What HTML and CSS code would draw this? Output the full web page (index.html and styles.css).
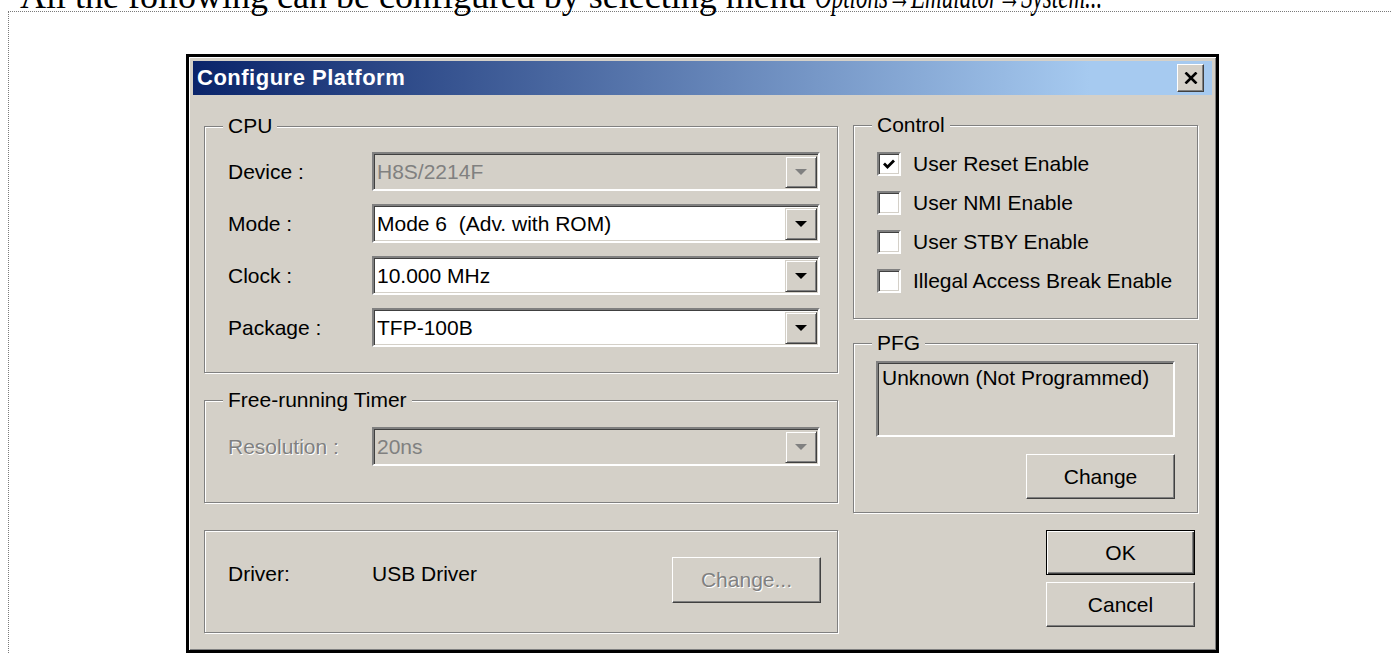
FILE: index.html
```html
<!DOCTYPE html>
<html lang="en">
<head>
<meta charset="utf-8">
<title>Configure Platform</title>
<link rel="stylesheet" href="styles.css">
</head>
<body>
<p class="lead">All the following can be configured by selecting menu <em class="menu-path">Options&#8594;Emulator&#8594;System...</em></p>

<div class="sheet">
  <div class="dialog">
    <div class="titlebar">
      <span class="title">Configure Platform</span>
      <span class="close-btn" aria-label="Close">
        <svg width="14" height="12" viewBox="0 0 14 12"><path d="M1.5 0.5 L12.5 11.5 M12.5 0.5 L1.5 11.5" stroke="#000" stroke-width="2.6" fill="none"/></svg>
      </span>
    </div>

    <div class="dialog-body">
      <div class="col col-left">
        <div class="group group-cpu">
          <span class="group-label">CPU</span>
          <div class="form-grid">
            <span class="field-label">Device :</span>
            <div class="combo is-disabled">
              <span class="combo-value">H8S/2214F</span>
              <span class="combo-btn"><svg width="12" height="6" viewBox="0 0 12 6"><path d="M0 0 H12 L6 6 Z"/></svg></span>
            </div>

            <span class="field-label">Mode :</span>
            <div class="combo">
              <span class="combo-value">Mode 6&nbsp; (Adv. with ROM)</span>
              <span class="combo-btn"><svg width="12" height="6" viewBox="0 0 12 6"><path d="M0 0 H12 L6 6 Z"/></svg></span>
            </div>

            <span class="field-label">Clock :</span>
            <div class="combo">
              <span class="combo-value">10.000 MHz</span>
              <span class="combo-btn"><svg width="12" height="6" viewBox="0 0 12 6"><path d="M0 0 H12 L6 6 Z"/></svg></span>
            </div>

            <span class="field-label">Package :</span>
            <div class="combo">
              <span class="combo-value">TFP-100B</span>
              <span class="combo-btn"><svg width="12" height="6" viewBox="0 0 12 6"><path d="M0 0 H12 L6 6 Z"/></svg></span>
            </div>
          </div>
        </div>

        <div class="group group-timer">
          <span class="group-label">Free-running Timer</span>
          <div class="form-grid">
            <span class="field-label is-disabled">Resolution :</span>
            <div class="combo is-disabled">
              <span class="combo-value">20ns</span>
              <span class="combo-btn"><svg width="12" height="6" viewBox="0 0 12 6"><path d="M0 0 H12 L6 6 Z"/></svg></span>
            </div>
          </div>
        </div>

        <div class="group group-driver">
          <span class="driver-label">Driver:</span>
          <span class="driver-name">USB Driver</span>
          <button class="btn btn-driver" disabled>Change...</button>
        </div>
      </div>

      <div class="col col-right">
        <div class="group group-control">
          <span class="group-label">Control</span>
          <label class="check-row">
            <span class="checkbox is-checked"><svg width="14" height="14" viewBox="0 0 14 14"><path d="M2 6.5 L5.5 10 L12 3.5" stroke="#000" stroke-width="2.8" fill="none"/></svg></span>
            <span>User Reset Enable</span>
          </label>
          <label class="check-row">
            <span class="checkbox"></span>
            <span>User NMI Enable</span>
          </label>
          <label class="check-row">
            <span class="checkbox"></span>
            <span>User STBY Enable</span>
          </label>
          <label class="check-row">
            <span class="checkbox"></span>
            <span>Illegal Access Break Enable</span>
          </label>
        </div>

        <div class="group group-pfg">
          <span class="group-label">PFG</span>
          <div class="static-box">Unknown (Not Programmed)</div>
          <button class="btn btn-pfg">Change</button>
        </div>

        <div class="dialog-actions">
          <button class="btn btn-default">OK</button>
          <button class="btn">Cancel</button>
        </div>
      </div>
    </div>
  </div>
</div>
</body>
</html>
```

FILE: styles.css
```css
* {
  box-sizing: border-box;
}

html,
body {
  margin: 0;
  background: #fff;
}

body {
  height: 653px;
  overflow: hidden;
  font-family: "Liberation Sans", Arial, sans-serif;
  font-size: 21px;
  color: #000;
}

/* document paragraph above the figure frame */
.lead {
  margin: -22px 0 0 20px;
  height: 33px;
  font: 36px/36px "Liberation Serif", "Times New Roman", serif;
  white-space: nowrap;
}

/* the menu path is set in a condensed italic */
.menu-path {
  display: inline-block;
  transform: scaleX(0.64);
  transform-origin: 0 50%;
}

/* dotted figure frame */
.sheet {
  margin-left: 8px;
  height: 642px;
  padding: 42px 0 0 177px;
  border-top: 1px dotted #7a7a7a;
  border-left: 1px dotted #7a7a7a;
}

/* classic window */
.dialog {
  width: 1033px;
  height: 599px;
  padding: 4px;
  background: #d4d0c8;
  border: 3px solid #000;
  box-shadow: inset 1px 1px 0 #fff, inset -1px -1px 0 #808080;
  display: flex;
  flex-direction: column;
}

.titlebar {
  height: 34px;
  flex: none;
  display: flex;
  align-items: center;
  padding: 0 8px 0 4px;
  background: linear-gradient(to right, #0a246a 0%, #a6caf0 88%, #a6caf0 100%);
}

.title {
  color: #fff;
  font-weight: bold;
  font-size: 22px;
  letter-spacing: 0.5px;
}

.close-btn {
  margin-left: auto;
  width: 27px;
  height: 28px;
  display: flex;
  align-items: center;
  justify-content: center;
  background: #d4d0c8;
  border: 1px solid;
  border-color: #fff #404040 #404040 #fff;
  box-shadow: inset -1px -1px 0 #808080;
}

.dialog-body {
  flex: 1;
  display: flex;
  gap: 15px;
  padding: 30px 14px 0 11px;
}

.col {
  display: flex;
  flex-direction: column;
}

.col-left {
  width: 634px;
  gap: 27px;
  padding-top: 1px;
}

.col-right {
  width: 345px;
}

/* etched group frame */
.group {
  position: relative;
  border: 1px solid #808080;
  box-shadow: inset 1px 1px 0 #fff, 1px 1px 0 #fff;
}

.group-label {
  position: absolute;
  top: -13px;
  left: 18px;
  padding: 0 5px;
  line-height: 24px;
  background: #d4d0c8;
  white-space: nowrap;
}

.group-cpu {
  height: 247px;
  padding: 25px 0 0 23px;
}

.group-timer {
  height: 103px;
  padding: 26px 0 0 23px;
}

.form-grid {
  display: grid;
  grid-template-columns: 144px 448px;
  row-gap: 13px;
  align-items: center;
}

.field-label {
  line-height: 24px;
  white-space: nowrap;
}

.is-disabled.field-label,
.btn:disabled {
  color: #808080;
  text-shadow: 1px 1px 0 #fff;
}

/* sunken drop-down field */
.combo {
  height: 39px;
  display: flex;
  align-items: stretch;
  background: #fff;
  border: 2px solid;
  border-color: #808080 #fff #fff #808080;
  box-shadow: inset 1px 1px 0 #404040, inset -1px -1px 0 #d4d0c8;
}

.combo-value {
  flex: 1;
  padding: 0 0 0 3px;
  margin-top: 1px;
  display: flex;
  align-items: center;
  white-space: pre;
}

.combo-btn {
  width: 32px;
  margin: 2px 1px 1px 0;
  display: flex;
  align-items: center;
  justify-content: center;
  background: #d4d0c8;
  border: 1px solid;
  border-color: #d4d0c8 #404040 #404040 #d4d0c8;
  box-shadow: inset 1px 1px 0 #fff, inset -1px -1px 0 #808080;
}

.combo-btn svg {
  fill: #000;
}

.combo.is-disabled {
  background: #d4d0c8;
  color: #808080;
}

.combo.is-disabled .combo-btn svg {
  fill: #808080;
}

/* driver row */
.group-driver {
  height: 103px;
  display: flex;
  align-items: flex-start;
  padding: 26px 16px 0 23px;
}

.driver-label {
  width: 144px;
  margin-top: 5px;
  line-height: 24px;
}

.driver-name {
  margin-top: 5px;
  line-height: 24px;
}

/* push buttons */
.btn {
  width: 149px;
  height: 45px;
  padding: 0;
  font: inherit;
  color: #000;
  background: #d4d0c8;
  border: 1px solid;
  border-color: #fff #404040 #404040 #fff;
  box-shadow: inset -1px -1px 0 #808080;
}

.btn-driver {
  margin-left: auto;
  height: 46px;
}

.btn-default {
  border-color: #000;
  box-shadow: inset 1px 1px 0 #fff, inset -1px -1px 0 #404040, inset -2px -2px 0 #808080;
}

/* control check boxes */
.group-control {
  height: 194px;
  padding: 18px 0 0 23px;
}

.check-row {
  height: 39px;
  display: flex;
  align-items: center;
  gap: 12px;
  white-space: nowrap;
}

.checkbox {
  width: 24px;
  height: 24px;
  flex: none;
  display: flex;
  align-items: center;
  justify-content: center;
  background: #fff;
  border: 2px solid;
  border-color: #808080 #fff #fff #808080;
  box-shadow: inset 1px 1px 0 #404040, inset -1px -1px 0 #d4d0c8;
}

/* PFG */
.group-pfg {
  margin-top: 24px;
  height: 170px;
  display: flex;
  flex-direction: column;
  padding: 17px 22px 0 22px;
}

.static-box {
  height: 76px;
  padding: 3px 4px;
  line-height: 24px;
  white-space: nowrap;
  border: 2px solid;
  border-color: #808080 #fff #fff #808080;
  box-shadow: inset 1px 1px 0 #404040, inset -1px -1px 0 #d4d0c8;
}

.btn-pfg {
  align-self: flex-end;
  margin-top: 17px;
}

.dialog-actions {
  margin-top: 17px;
  display: flex;
  flex-direction: column;
  align-items: flex-end;
  gap: 7px;
  padding-right: 3px;
}
```
